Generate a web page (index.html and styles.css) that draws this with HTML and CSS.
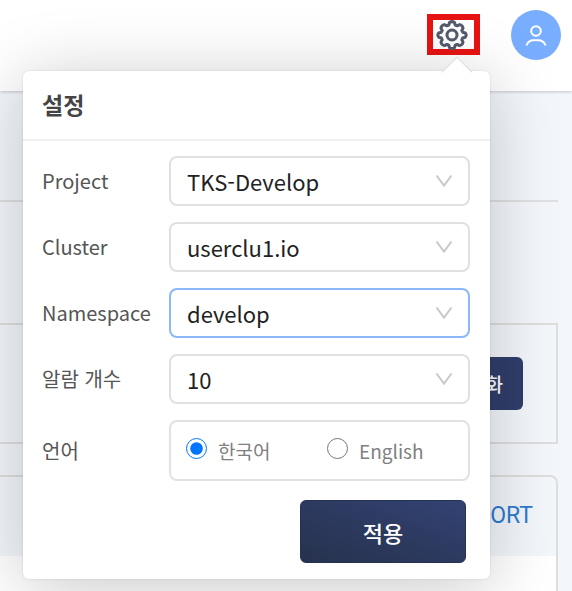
FILE: index.html
```html
<!DOCTYPE html>
<html lang="ko">
<head>
<meta charset="utf-8">
<meta name="viewport" content="width=device-width, initial-scale=1">
<title>설정</title>
<link rel="stylesheet" href="styles.css">
</head>
<body>
<header class="topbar">
  <div class="settings">
    <button class="settings-toggle" type="button" aria-label="설정">
      <svg class="gear" viewBox="0 0 32 30" aria-hidden="true">
        <path d="M13.500 2.500Q16 .8 18.500 2.500L19.200 5 21.200 5.800 23.600 4.600Q26.800 5.200 27 8.200L25.800 10.400 26.700 12.200 29.300 13Q31 15 29.300 17.200L26.700 18 25.800 19.800 27 22Q26.800 25 23.600 25.600L21.200 24.400 19.200 25.200 18.500 27.700Q16 29.400 13.500 27.700L12.800 25.200 10.800 24.400 8.400 25.600Q5.200 25 5 22L6.200 19.800 5.300 18 2.700 17.200Q1 15 2.700 13L5.300 12.200 6.200 10.400 5 8.200Q5.200 5.200 8.400 4.600L10.800 5.800 12.800 5Z"/>
        <circle cx="16" cy="15" r="5"/>
      </svg>
    </button>
    <section class="popover" aria-labelledby="settings-title">
      <h2 class="popover-title" id="settings-title">설정</h2>
      <form class="form">
        <label class="label" for="project">Project</label>
        <div class="select-box">
          <select class="select" id="project"><option>TKS-Develop</option></select>
          <svg class="chevron" viewBox="0 0 18 14" aria-hidden="true"><path d="M1.500 1.500 9 11.500l7.500-10"/></svg>
        </div>
        <label class="label" for="cluster">Cluster</label>
        <div class="select-box">
          <select class="select" id="cluster"><option>userclu1.io</option></select>
          <svg class="chevron" viewBox="0 0 18 14" aria-hidden="true"><path d="M1.500 1.500 9 11.500l7.500-10"/></svg>
        </div>
        <label class="label" for="namespace">Namespace</label>
        <div class="select-box">
          <select class="select select-active" id="namespace"><option>develop</option></select>
          <svg class="chevron" viewBox="0 0 18 14" aria-hidden="true"><path d="M1.500 1.500 9 11.500l7.500-10"/></svg>
        </div>
        <label class="label" for="alarms">알람 개수</label>
        <div class="select-box">
          <select class="select" id="alarms"><option>10</option></select>
          <svg class="chevron" viewBox="0 0 18 14" aria-hidden="true"><path d="M1.500 1.500 9 11.500l7.500-10"/></svg>
        </div>
        <span class="label" id="language">언어</span>
        <div class="radios" role="radiogroup" aria-labelledby="language">
          <label class="radio-label"><input class="radio" type="radio" name="lang" checked>한국어</label>
          <label class="radio-label"><input class="radio" type="radio" name="lang">English</label>
        </div>
        <div class="actions"><button class="apply" type="button">적용</button></div>
      </form>
    </section>
  </div>
  <button class="avatar" type="button" aria-label="내 계정">
    <svg class="person" viewBox="0 0 24 24" aria-hidden="true">
      <circle cx="12" cy="8" r="4.800"/>
      <path d="M2.500 22.500c1.200-3.400 3.500-5.300 7-5.300h5c3.500 0 5.800 1.900 7 5.300"/>
    </svg>
  </button>
</header>
<main class="page">
  <div class="page-head"></div>
  <div class="filters"><button class="reset" type="button">초기화</button></div>
  <section class="panel">
    <div class="panel-head"><a class="export" href="#">EXPORT</a></div>
    <div class="panel-body"></div>
  </section>
</main>
</body>
</html>
```

FILE: styles.css
```css
* { box-sizing: border-box; }

body {
  margin: 0;
  min-height: 100vh;
  display: flex;
  flex-direction: column;
  overflow: hidden;
  background: #f3f7fb;
  color: #444;
  font-family: "Noto Sans CJK KR", "Noto Sans", sans-serif;
}

button, select, input { font: inherit; }

.topbar {
  position: relative;
  z-index: 1;
  display: flex;
  justify-content: flex-end;
  align-items: center;
  gap: 31px;
  height: 91px;
  padding: 0 11px 22px;
  background: #fff;
  box-shadow: 0 1px 3px rgba(0, 0, 0, 0.2);
}

.settings { position: relative; }

.settings-toggle {
  display: flex;
  align-items: center;
  justify-content: center;
  width: 53px;
  height: 41px;
  padding: 0;
  border: 6px solid #e81313;
  background: #fff;
}

.gear {
  flex: none;
  width: 32px;
  height: 30px;
  margin-right: 3px;
  fill: none;
  stroke: #555b6c;
  stroke-width: 3;
  stroke-linejoin: round;
}

.avatar {
  display: flex;
  align-items: center;
  justify-content: center;
  width: 50px;
  height: 50px;
  padding: 0;
  border: 0;
  border-radius: 50%;
  background: #79adfd;
}

.person {
  width: 24px;
  height: 24px;
  fill: none;
  stroke: #fff;
  stroke-width: 2;
}

.popover {
  position: absolute;
  top: 57px;
  right: -10px;
  width: calc(100vw - 105px);
  max-width: 467px;
  border-radius: 6px;
  background: #fff;
  box-shadow: 0 0 2px rgba(0, 0, 0, 0.15), 0 8px 70px rgba(0, 0, 0, 0.22);
}

.popover::before {
  content: "";
  position: absolute;
  top: -10px;
  right: 22px;
  width: 21px;
  height: 21px;
  border: solid #dedede;
  border-width: 1px 0 0 1px;
  background: linear-gradient(135deg, #fff 50%, transparent 50%);
  transform: rotate(45deg);
}

.popover-title {
  margin: 0;
  padding: 15px 19px 17px;
  border-bottom: 2px solid #f0f0f0;
  font-size: 23px;
  font-weight: 700;
  line-height: 36px;
}

.form {
  display: grid;
  grid-template-columns: 111px 1fr;
  gap: 16px;
  align-items: center;
  padding: 15px 20px 16px 19px;
}

.label {
  color: #555;
  font-size: 20px;
  line-height: 30px;
  white-space: nowrap;
}

.select-box { position: relative; }

.select {
  display: block;
  width: 100%;
  height: 50px;
  padding: 0 48px 1px 16px;
  border: 2px solid #e0e0e0;
  border-radius: 8px;
  outline: 0;
  appearance: none;
  background: #fff;
  color: #222;
  font-size: 22px;
}

.select-active { border-color: #8bb8f8; }

.chevron {
  position: absolute;
  top: 18px;
  right: 17px;
  width: 18px;
  height: 14px;
  fill: none;
  stroke: #c8c8c8;
  stroke-width: 2;
  pointer-events: none;
}

.radios {
  display: grid;
  grid-template-columns: 141px 1fr;
  align-items: center;
  height: 61px;
  padding: 0 15px;
  border: 2px solid #e2e2e2;
  border-radius: 8px;
}

.radio-label {
  display: flex;
  align-items: center;
  gap: 11px;
  color: #808080;
  font-size: 19px;
  line-height: 30px;
}

.radio {
  width: 21px;
  height: 21px;
  margin: 0 0 4px;
}

.actions {
  grid-column: 1 / -1;
  display: flex;
  justify-content: flex-end;
  padding: 3px 4px 0;
}

.apply {
  width: 166px;
  height: 63px;
  padding: 0;
  border: 1px solid #243253;
  border-radius: 6px;
  background: linear-gradient(20deg, #26324d, #334273);
  color: #fff;
  font-size: 22px;
  font-weight: 500;
}

.page {
  flex: 1;
  display: flex;
  flex-direction: column;
  padding-right: 14px;
}

.page-head {
  height: 111px;
  border-bottom: 2px solid #e0e0e2;
}

.filters {
  display: flex;
  justify-content: flex-end;
  margin-top: 121px;
  padding: 32px 33px 32px 0;
  border: 2px solid #dedede;
  border-left: 0;
}

.reset {
  height: 53px;
  padding: 0 20px;
  border: 0;
  border-radius: 6px;
  background: #303e6b;
  color: #fff;
  font-size: 19px;
  font-weight: 500;
}

.panel {
  flex: 1;
  display: flex;
  flex-direction: column;
  margin-top: 31px;
  border: 2px solid #dedede;
  border-width: 2px 2px 0 0;
  border-radius: 0 8px 0 0;
}

.panel-head {
  display: flex;
  align-items: center;
  justify-content: flex-end;
  height: 79px;
  padding: 0 23px 3px 0;
}

.export {
  color: #2b7bd3;
  font-family: Roboto, sans-serif;
  font-size: 23px;
  text-decoration: none;
}

.panel-body {
  flex: 1;
  background: #fff;
}
```
